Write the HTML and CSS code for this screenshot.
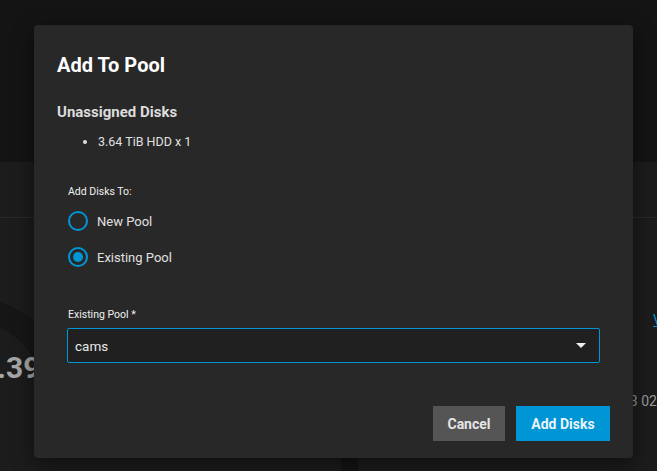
FILE: index.html
```html
<!DOCTYPE html>
<html lang="en">
<head>
    <meta charset="UTF-8">
    <meta name="viewport" content="width=device-width, initial-scale=1.0">
    <title>Add To Pool</title>
    <link rel="stylesheet" href="styles.css">
</head>
<body>

<!-- dashboard behind the dialog -->
<div class="backdrop">
    <div class="top-band"></div>
    <div class="cards">
        <div class="card card-left">
            <div class="card-head"></div>
            <div class="gauge">
                <div class="gauge-arc"></div>
                <span class="gauge-value">0.39%</span>
            </div>
        </div>
        <div class="card card-right">
            <div class="card-head"></div>
            <a class="card-link" href="#">View</a>
            <span class="card-text">03 02</span>
        </div>
    </div>
</div>

<div class="dialog">
    <h1>Add To Pool</h1>

    <h2>Unassigned Disks</h2>
    <ul class="disk-list">
        <li>3.64 TiB HDD x 1</li>
    </ul>

    <div class="field">
        <div class="field-label">Add Disks To:</div>
        <label class="radio">
            <span class="radio-circle"></span>
            <span>New Pool</span>
        </label>
        <label class="radio">
            <span class="radio-circle checked"></span>
            <span>Existing Pool</span>
        </label>
    </div>

    <div class="field select-field">
        <div class="field-label">Existing Pool *</div>
        <div class="select">
            <span>cams</span>
            <span class="caret"></span>
        </div>
    </div>

    <div class="actions">
        <button class="btn cancel">Cancel</button>
        <button class="btn primary">Add Disks</button>
    </div>
</div>

</body>
</html>
```

FILE: styles.css
```css
body {
    margin: 0;
    padding: 0;
    background-color: #141414;
    font-family: Roboto, "Liberation Sans", sans-serif;
    color: #e6e6e6;
    overflow: hidden;
    height: 471px;
}

.backdrop {
    height: 471px;
}

.top-band {
    height: 162px;
}

.cards {
    display: flex;
    gap: 17px;
    height: 309px;
}

.card {
    background-color: #1c1c1c;
    position: relative;
    overflow: hidden;
}

.card-left {
    width: 341px;
}

.card-right {
    flex: 1;
}

.card-head {
    height: 55px;
    border-bottom: 1px solid #2a2a2a;
}

.gauge {
    position: relative;
    height: 220px;
}

/* only the top-right part of the ring shows beside the dialog */
.gauge-arc {
    position: absolute;
    left: -130px;
    top: 79px;
    width: 150px;
    height: 150px;
    border-radius: 50%;
    border: 24px solid #161616;
    border-bottom-color: transparent;
    border-left-color: transparent;
    transform: rotate(-20deg);
}

.gauge-value {
    position: absolute;
    left: -20px;
    top: 132px;
    font-size: 30px;
    font-weight: bold;
    color: #a6a6a6;
    white-space: nowrap;
}

.card-link {
    position: absolute;
    left: 295px;
    top: 150px;
    color: #0095d5;
    font-size: 14px;
}

.card-text {
    position: absolute;
    left: 264px;
    top: 231px;
    color: #9a9a9a;
    font-size: 14px;
    white-space: nowrap;
}

.dialog {
    position: absolute;
    left: 34px;
    top: 25px;
    width: 599px;
    height: 433px;
    box-sizing: border-box;
    padding: 28px 23px 0 23px;
    background-color: #282828;
    border-radius: 4px;
    box-shadow: 0 6px 20px rgba(0, 0, 0, 0.5);
}

h1 {
    margin: 0;
    font-size: 20px;
    font-weight: bold;
    color: #fff;
    line-height: 24px;
}

h2 {
    margin: 24px 0 0 0;
    font-size: 15px;
    font-weight: bold;
    color: #dcdcdc;
    line-height: 22px;
}

.disk-list {
    margin: 11px 0 0 0;
    padding-left: 41px;
    font-size: 12.5px;
    line-height: 16px;
    color: #e0e0e0;
}

.field {
    padding-left: 11px;
}

.field-label {
    font-size: 10.5px;
    color: #f0f0f0;
    line-height: 14px;
}

.field:first-of-type {
    margin-top: 35px;
}

.radio {
    display: flex;
    align-items: center;
    gap: 9px;
    height: 20px;
    margin-top: 16px;
    font-size: 13px;
    color: #e0e0e0;
}

.radio:first-of-type {
    margin-top: 12px;
}

.radio-circle {
    width: 16px;
    height: 16px;
    border: 2px solid #0095d5;
    border-radius: 50%;
    box-sizing: content-box;
    display: inline-flex;
    align-items: center;
    justify-content: center;
}

.radio-circle.checked::after {
    content: "";
    width: 10px;
    height: 10px;
    border-radius: 50%;
    background-color: #0095d5;
}

.select-field {
    margin-top: 41px;
    padding-left: 10px;
}

.select-field .field-label {
    padding-left: 1px;
}

.select {
    margin-top: 6px;
    width: 533px;
    height: 35px;
    box-sizing: border-box;
    border: 1px solid #0095d5;
    border-radius: 2px;
    background-color: #202020;
    display: flex;
    align-items: center;
    justify-content: space-between;
    padding: 0 13px 0 7px;
    font-size: 13.5px;
    color: #e8e8e8;
}

.caret {
    width: 0;
    height: 0;
    border-left: 5px solid transparent;
    border-right: 5px solid transparent;
    border-top: 5px solid #f0f0f0;
}

.actions {
    display: flex;
    justify-content: flex-end;
    gap: 11px;
    margin-top: 43px;
    padding-right: 0;
}

.btn {
    height: 35px;
    border: none;
    font-family: Roboto, "Liberation Sans", sans-serif;
    font-size: 14px;
    font-weight: bold;
    color: #e6e6e6;
    cursor: pointer;
    border-radius: 0;
}

.cancel {
    width: 72px;
    background-color: #555555;
}

.primary {
    width: 94px;
    background-color: #0095d5;
    color: #e8f4fb;
}
```
